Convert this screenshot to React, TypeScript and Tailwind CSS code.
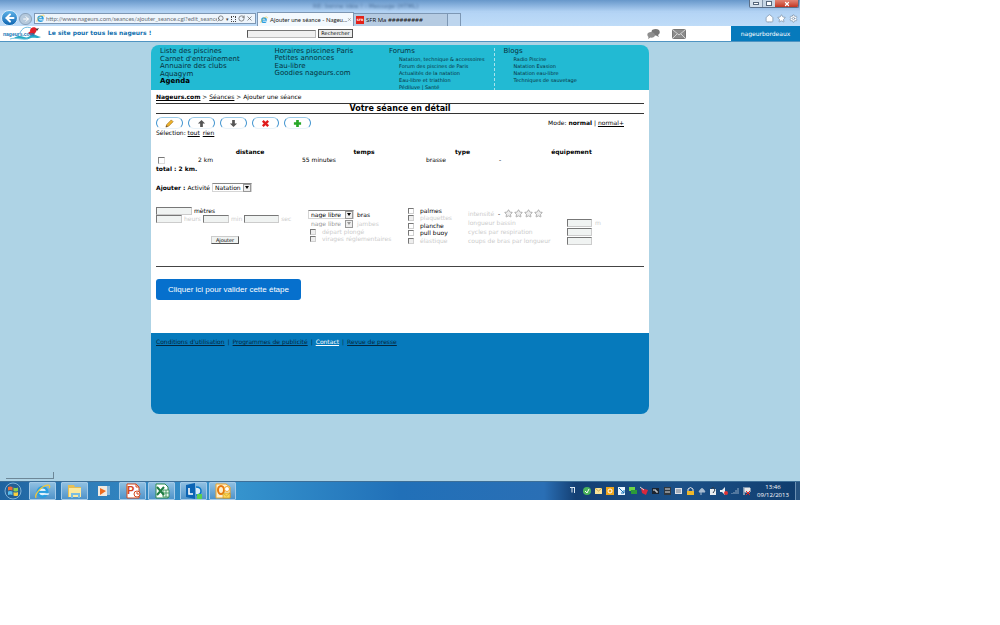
import React from 'react';
import type { ReactNode } from 'react';
import { Home, Star, Settings, Search, RotateCw, X, ArrowLeft, ArrowRight } from 'lucide-react';

const forums = [
  'Natation, technique & accessoires',
  'Forum des piscines de Paris',
  'Actualités de la natation',
  'Eau-libre et triathlon',
  'Pédiluve | Santé',
];
const blogs = ['Radio Piscine', 'Natation Evasion', 'Natation eau-libre', 'Techniques de sauvetage'];

const gear = [
  { id: 'palmes', label: 'palmes', on: true },
  { id: 'plaquettes', label: 'plaquettes', on: false },
  { id: 'planche', label: 'planche', on: true },
  { id: 'pullbuoy', label: 'pull buoy', on: true },
  { id: 'elastique', label: 'élastique', on: false },
];

const measures = [
  { id: 'bassin', label: 'longueur bassin', unit: 'm' },
  { id: 'cycles', label: 'cycles par respiration', unit: '' },
  { id: 'coups', label: 'coups de bras par longueur', unit: '' },
];

function IeLogo({ className }: { className: string }) {
  return (
    <svg viewBox="0 0 20 20" className={className}>
      <circle cx="10" cy="10.500" r="5.500" fill="#e4f3fc" stroke="#2a9fe0" strokeWidth="3.200" />
      <path d="M5 10.500h11" stroke="#2a9fe0" strokeWidth="2.400" />
      <path d="M12 12h6l-1 2.200h-5z" fill="#d6ecfa" />
      <path d="M2.500 17.500C0 14 8 4 15.500 2.500c3-.6 3.500 1.500 2.300 3.500" fill="none" stroke="#f4c73a" strokeWidth="1.500" />
    </svg>
  );
}

function NageursLogo() {
  return (
    <svg viewBox="0 0 42 14" className="h-[14px] w-[42px] shrink-0">
      <path d="M20 7c2-5 6-7 11-5" fill="none" stroke="#6cbbe0" strokeWidth="1" />
      <path d="M30 5c0-4 5-5 7-2l-1 3c-1 2-4 2-6-1z" fill="#e0232c" />
      <path d="M28 7l4-3 3 4-3 2z" fill="#e0232c" />
      <path d="M36 3l3-1-2 3z" fill="#333" />
      <path d="M14 12c4-3 7-2 10-1s5 0 7-2 5 1 10 2c-4 2-7 0-10 1-4 2-10 1-17 0z" fill="#27a9c5" />
      <path d="M10 13c6-2 10 1 18 0" fill="none" stroke="#7cc9df" strokeWidth="1" />
      <text x="3" y="10" fontSize="5" fontWeight="bold" fill="#1474b4" fontFamily="Liberation Sans, sans-serif">
        nageurs.com
      </text>
    </svg>
  );
}

function BrowserChrome() {
  return (
    <header className="flex h-[26px] flex-col bg-linear-to-b from-[#6f9fd0] via-[#b4d4f5] to-[#bfdcf8]">
      <div className="flex h-[12px] items-start justify-between bg-linear-to-b from-[#6797ca] to-[#b4d4f5]">
        <span className="pl-[313px] pt-[1px] text-[6px] leading-[10px] text-[#4b719c] blur-[1px]">RE: bonne idée ! - Message (HTML)</span>
        <div className="mr-[1px] flex h-[8px] overflow-hidden rounded-b-[2px] border border-t-0 border-[#5b6f88]">
          <button aria-label="Réduire" className="flex w-[12px] items-center justify-center bg-[#d3dfeb]">
            <span className="h-[3px] w-[6px] border border-[#56677b] bg-white" />
          </button>
          <button aria-label="Restaurer" className="flex w-[13px] items-center justify-center border-l border-[#8496aa] bg-[#c7d6e5]">
            <span className="h-[5px] w-[6px] border border-[#56677b] bg-white" />
          </button>
          <button aria-label="Fermer" className="flex w-[23px] items-center justify-center bg-linear-to-b from-[#e28474] to-[#c23420] text-white">
            <X className="h-[6px] w-[6px]" strokeWidth={5} />
          </button>
        </div>
      </div>
      <div className="flex h-[14px] items-end">
        <button aria-label="Précédent" className="ml-[1px] flex h-[16px] w-[17px] shrink-0 items-center justify-center self-end rounded-full border border-[#d9ebfa] bg-linear-to-b from-[#5eb3e8] to-[#0966b2] text-white">
          <ArrowLeft className="h-[12px] w-[12px]" strokeWidth={4} />
        </button>
        <button aria-label="Suivant" className="ml-[1px] mr-[2px] flex h-[12px] w-[13px] shrink-0 items-center justify-center self-center rounded-full border border-[#8ba3bc] bg-[#b5c9dc] text-white">
          <ArrowRight className="h-[8px] w-[8px]" strokeWidth={3} />
        </button>
        <div className="mb-[2px] flex h-[11px] w-[222px] shrink-0 items-center border border-[#7d97b4] bg-[#eef5fc] text-[#444]">
          <IeLogo className="mx-[1px] h-[9px] w-[9px] shrink-0" />
          <input
            aria-label="Adresse"
            className="h-[9px] w-[171px] bg-transparent font-[Lato,sans-serif] text-[6px] leading-[9px] text-[#6a7078]"
            defaultValue="http://www.nageurs.com/seances/ajouter_seance.cgi?edit_seance="
          />
          <Search className="h-[7px] w-[7px] -scale-x-100" />
          <span className="mx-[2px] text-[5px]">▾</span>
          <span className="mr-[2px] h-[6px] w-[5px] border border-dotted border-[#444]" />
          <RotateCw className="mr-[1px] h-[7px] w-[7px]" />
          <X className="h-[7px] w-[7px]" />
        </div>
        <div className="ml-[1px] flex h-[14px] w-[97px] shrink-0 items-center border border-b-0 border-[#7d97b4] bg-[#f3f9fe]">
          <IeLogo className="mx-[2px] h-[8px] w-[8px] shrink-0" />
          <span className="flex-1 whitespace-nowrap font-[Lato,sans-serif] text-[6px] leading-[12px] text-[#222]">Ajouter une séance - Nageu...</span>
          <X className="mr-[1px] h-[5px] w-[5px] text-[#666]" />
        </div>
        <div className="flex h-[13px] w-[94px] shrink-0 items-center border border-b-0 border-l-0 border-[#7d97b4] bg-[#b5cbe2]">
          <span className="mx-[2px] h-[8px] w-[8px] bg-[#e32118] text-center text-[3px] font-bold leading-[8px] text-white">SFR</span>
          <span className="font-['Open_Sans',sans-serif] text-[6px] leading-[12px] text-[#111]">SFR Ma #########</span>
        </div>
        <div className="h-[13px] w-[13px] shrink-0 border border-b-0 border-l-0 border-[#7d97b4] bg-[#bdd5ee]" />
        <div className="mb-[3px] ml-auto mr-[2px] flex gap-[3px] text-[#7e92a8]">
          <Home className="h-[9px] w-[9px] fill-white" />
          <Star className="h-[9px] w-[9px] fill-white" />
          <Settings className="h-[9px] w-[9px] fill-white" />
        </div>
      </div>
    </header>
  );
}

function SiteBar() {
  return (
    <div className="flex h-[16px] items-stretch border-b border-[#4f94c2] bg-white">
      <NageursLogo />
      <p className="ml-[6px] w-[199px] shrink-0 whitespace-nowrap text-[6px] font-bold leading-[14px] text-[#1270ae]">Le site pour tous les nageurs !</p>
      <form className="flex items-center gap-[2px]">
        <input aria-label="Recherche" className="h-[8px] w-[69px] border border-[#bbb] border-l-[#555] border-t-[#777] bg-[#f0f0f0] text-[6px]" />
        <button type="button" className="h-[9px] w-[35px] border border-[#555] bg-[#ececec] text-center text-[5px] leading-[7px] text-black">Rechercher</button>
      </form>
      <div className="ml-auto flex items-center gap-[12px] pr-[45px]">
        <svg viewBox="0 0 13 10" className="h-[10px] w-[13px]">
          <path d="M5 1q4-2 7 0 2 3-1 5l1 2-3-1.500Q5 7 4 4.500z" fill="#777" />
          <path d="M1 4q3-2 6 0 2 2 0 4-2 1-3.500.5L1 10l.5-2Q-.5 6 1 4z" fill="#8e8e8e" />
        </svg>
        <svg viewBox="0 0 14 10" className="h-[10px] w-[14px]">
          <rect x=".5" y=".5" width="13" height="9" rx="1" fill="#8b8b8b" stroke="#777" />
          <path d="M1 1l6 5 6-5M1 9l4-4M13 9L9 5" fill="none" stroke="#e4e4e4" strokeWidth=".8" />
        </svg>
      </div>
      <a href="#compte" className="w-[69px] bg-[#067abc] text-center text-[6px] leading-[15px] text-white">nageurbordeaux</a>
    </div>
  );
}

function SubLinks({ items }: { items: string[] }) {
  return (
    <ul className="pl-[10px] pt-[1px] text-[5px] leading-[7px]">
      {items.map((item) => (
        <li key={item} className="whitespace-nowrap">
          <a href="#lien">{item}</a>
        </li>
      ))}
    </ul>
  );
}

function Nav() {
  return (
    <nav className="grid h-[45px] grid-cols-4 overflow-hidden rounded-t-[8px] bg-[#22bad3] pl-[9px] pr-[31px] pt-[3px] text-[7px] leading-[7px] text-[#07303c]">
      <div className="flex h-[37px] flex-col justify-between whitespace-nowrap">
        <a href="#piscines">Liste des piscines</a>
        <a href="#carnet">Carnet d'entraînement</a>
        <a href="#clubs">Annuaire des clubs</a>
        <a href="#aquagym">Aquagym</a>
        <a href="#agenda" className="font-bold text-black">Agenda</a>
      </div>
      <div className="flex h-[29px] flex-col justify-between whitespace-nowrap">
        <a href="#horaires">Horaires piscines Paris</a>
        <a href="#annonces">Petites annonces</a>
        <a href="#eau">Eau-libre</a>
        <a href="#goodies">Goodies nageurs.com</a>
      </div>
      <div className="mr-[9px] border-r border-dashed border-[#a8e2ec]">
        <a href="#forums" className="block">Forums</a>
        <SubLinks items={forums} />
      </div>
      <div>
        <a href="#blogs" className="block">Blogs</a>
        <SubLinks items={blogs} />
      </div>
    </nav>
  );
}

function ToolButton({ label, children }: { label: string; children: ReactNode }) {
  return (
    <button aria-label={label} className="flex h-[12px] w-[27px] items-center justify-center rounded-[6px] border border-x-[#3f93cf] border-b-[#eaf3f9] border-t-[#9ccbe8] bg-white">
      <svg viewBox="0 0 10 10" className="h-[9px] w-[9px]">
        {children}
      </svg>
    </button>
  );
}

function Toolbar() {
  return (
    <div className="mt-[3px] flex items-center justify-between">
      <div className="flex gap-[5px]">
        <ToolButton label="Modifier">
          <path d="M1 9l1-3 5-5 2 2-5 5z" fill="#f0b429" stroke="#9a6a14" strokeWidth=".7" />
          <path d="M1 9l1-2 1 1z" fill="#433" />
        </ToolButton>
        <ToolButton label="Monter">
          <path d="M5 1l4 4H6.500v4h-3V5H1z" fill="#555" />
        </ToolButton>
        <ToolButton label="Descendre">
          <path d="M5 9l4-4H6.500V1h-3v4H1z" fill="#555" />
        </ToolButton>
        <ToolButton label="Supprimer">
          <path d="M2 2l6 6M8 2L2 8" stroke="#e01b1b" strokeWidth="2.600" />
        </ToolButton>
        <ToolButton label="Insérer">
          <path d="M5 1v8M1 5h8" stroke="#28a828" strokeWidth="3" />
        </ToolButton>
      </div>
      <p className="mr-[20px]">
        Mode: <b>normal</b> | <a href="#mode" className="underline">normal+</a>
      </p>
    </div>
  );
}

function Check({ id, label, on }: { id: string; label: string; on: boolean }) {
  return (
    <div className="flex h-[7px] items-center gap-[6px]">
      <input
        id={id}
        type="checkbox"
        disabled={!on}
        className="h-[6px] w-[6px] appearance-none border border-[#d0d0d0] border-l-[#777] border-t-[#777] bg-white disabled:bg-[#eee]"
      />
      <label htmlFor={id} className={on ? 'whitespace-nowrap' : 'whitespace-nowrap text-[#ccc]'}>
        {label}
      </label>
    </div>
  );
}

function Drop({ id, value, disabled, className }: { id: string; value: string; disabled?: boolean; className: string }) {
  return (
    <span className={`inline-flex h-[9px] items-center border ${disabled ? 'border-transparent text-[#999]' : 'border-[#d5d5d5] border-t-[#888]'} ${className}`}>
      <select id={id} disabled={disabled} className="h-[7px] min-w-0 flex-1 appearance-none pl-[2px] text-[6px] leading-[7px]">
        <option>{value}</option>
      </select>
      <span className="flex h-[8px] w-[8px] items-center justify-center border border-[#999] bg-[#eee]">
        <svg viewBox="0 0 4 3" className="h-[3px] w-[4px]">
          <path d="M0 0h4L2 3z" fill="currentColor" />
        </svg>
      </span>
    </span>
  );
}

function Box({ id, className, disabled }: { id: string; className: string; disabled?: boolean }) {
  return (
    <input
      id={id}
      aria-label={id}
      disabled={disabled}
      className={`h-[8px] border border-[#ccc] border-l-[#777] border-t-[#777] bg-[#f0f3f2] text-[6px] ${className}`}
    />
  );
}

function SetTable() {
  return (
    <table className="mt-[11px] w-full table-fixed text-left leading-[8px]">
      <thead className="text-center">
        <tr>
          <th className="w-[42px]" />
          <th className="w-[104px]">distance</th>
          <th className="w-[124px]">temps</th>
          <th className="w-[73px]">type</th>
          <th>équipement</th>
        </tr>
      </thead>
      <tbody>
        <tr>
          <td>
            <input type="checkbox" aria-label="Sélectionner 2 km" className="ml-[2px] block h-[7px] w-[7px] appearance-none border border-[#ddd] border-l-[#888] border-t-[#777]" />
          </td>
          <td>2 km</td>
          <td>55 minutes</td>
          <td>brasse</td>
          <td>-</td>
        </tr>
      </tbody>
    </table>
  );
}

function AddForm() {
  return (
    <form className="mt-[15px] flex h-[44px] items-start">
      <div className="w-[152px] shrink-0">
        <div className="flex h-[8px] items-center gap-[2px]">
          <Box id="distance" className="w-[36px]" />
          <label htmlFor="distance">mètres</label>
        </div>
        <div className="flex h-[8px] items-center gap-[2px] text-[#ccc]">
          <Box id="heures" className="w-[26px]" disabled />
          <label htmlFor="heures">heurs</label>
          <Box id="minutes" className="w-[26px]" disabled />
          <label htmlFor="minutes">min</label>
          <Box id="secondes" className="w-[35px]" disabled />
          <label htmlFor="secondes">sec</label>
        </div>
        <button type="button" className="ml-[55px] mt-[13px] block h-[8px] w-[28px] border border-[#ccc] border-b-[#555] border-r-[#555] bg-[#f0f3f2] text-center text-[5px] leading-[6px]">
          Ajouter
        </button>
      </div>
      <div className="w-[100px] shrink-0 pt-[3px]">
        <div className="flex h-[9px] items-center gap-[3px]">
          <Drop id="bras" value="nage libre" className="w-[46px]" />
          <label htmlFor="bras">bras</label>
        </div>
        <div className="flex h-[9px] items-center gap-[3px] text-[#ccc]">
          <Drop id="jambes" value="nage libre" disabled className="w-[46px]" />
          <label htmlFor="jambes">jambes</label>
        </div>
        <div className="pl-[2px]">
          <Check id="depart" label="départ plongé" on={false} />
          <Check id="virages" label="virages réglementaires" on={false} />
        </div>
      </div>
      <div className="flex h-[37px] w-[60px] shrink-0 flex-col justify-between">
        {gear.map((item) => (
          <Check key={item.id} {...item} />
        ))}
      </div>
      <div className="pt-[2px] text-[#ccc]">
        <div className="flex h-[9px] items-center">
          <span className="w-[30px]">intensité</span>
          <span className="w-[6px] text-black">-</span>
          {[1, 2, 3, 4].map((n) => (
            <button key={n} type="button" aria-label={`Intensité ${n}`} className="w-[10px]">
              <Star className="h-[9px] w-[9px] fill-[#eee] text-[#999]" />
            </button>
          ))}
        </div>
        {measures.map((m) => (
          <div key={m.id} className="flex h-[9px] items-center">
            <label htmlFor={m.id} className="w-[99px] whitespace-nowrap">{m.label}</label>
            <Box id={m.id} className="mr-[3px] w-[25px]" disabled />
            {m.unit}
          </div>
        ))}
      </div>
    </form>
  );
}

function PageFooter() {
  return (
    <footer className="flex h-[81px] gap-[3px] rounded-b-[8px] bg-[#067abc] px-[5px] pt-[5px] text-[6px] leading-[8px] text-[#04263c]">
      <a href="#conditions" className="underline">Conditions d'utilisation</a>
      <span>|</span>
      <a href="#pub" className="underline">Programmes de publicité</a>
      <span>|</span>
      <a href="#contact" className="text-white underline">Contact</a>
      <span>|</span>
      <a href="#presse" className="underline">Revue de presse</a>
    </footer>
  );
}

function OfficeIcon({ letter, color }: { letter: string; color: string }) {
  return (
    <svg viewBox="0 0 16 16" className="h-[16px] w-[16px]">
      <path d="M2 1h9l3 3v11H2z" fill="#fff" stroke={color} />
      <path d="M11 1v3h3" fill="none" stroke={color} />
      <text x="2" y="11" fontSize="11" fontWeight="bold" fill={color} fontFamily="Liberation Sans, sans-serif">
        {letter}
      </text>
      <circle cx="12" cy="11" r="3" fill="#fff" stroke={color} />
      <path d="M12 9v2h2" fill="none" stroke={color} />
    </svg>
  );
}

function TaskButton({ label, plain, children }: { label: string; plain?: boolean; children: ReactNode }) {
  return (
    <button
      aria-label={label}
      className={`flex h-[18px] w-[27px] items-center justify-center ${plain ? '' : 'rounded-[1px] border border-[#a3cae8] bg-linear-to-b from-[#8fc0e2] to-[#4f93c9]'}`}
    >
      {children}
    </button>
  );
}

function TrayIcons() {
  return (
    <svg viewBox="0 0 182 10" className="h-[10px] w-[182px] shrink-0">
      <path d="M1 1.500h5M3 1.500v5M5.500 2v5" stroke="#dce8f2" fill="none" />
      <circle cx="18" cy="5" r="4" fill="#4bb35b" />
      <path d="M16 5l2 2 2-4" stroke="#fff" fill="none" />
      <path d="M26 2h7v6h-7z" fill="#f8e39a" />
      <path d="M26 2l3.500 3L33 2" stroke="#b48b2d" fill="none" strokeWidth=".7" />
      <path d="M37 1h8v8h-8z" fill="#eda51d" />
      <circle cx="41" cy="5" r="2" fill="none" stroke="#fff" />
      <path d="M49 1h7v8h-7z" fill="#eaf5ff" />
      <path d="M50 2l5 5M52 7h3V4" stroke="#1573b9" fill="none" />
      <path d="M60 1h6v4h-6z" fill="#6fd545" />
      <path d="M62 4h6v4h-6z" fill="#2b9a39" />
      <path d="M72 2l7 2-2 5-4-2z" fill="#d9283c" />
      <path d="M71 1l4 3" stroke="#ddd" />
      <path d="M83 2h7v6h-7z" fill="#1b2431" />
      <path d="M84 4h3v2h2" stroke="#eee" fill="none" />
      <path d="M95 1h7v8h-7z" fill="#303840" />
      <path d="M96 3h5M96 6h5" stroke="#ddd" />
      <path d="M106 2h7v6h-7z" fill="#dde1e7" />
      <path d="M107 4h5M107 6h5" stroke="#69798b" />
      <path d="M118 5h7v4h-7z" fill="#efb72a" />
      <path d="M119 5V3q2.500-3 5 0v2" stroke="#e7e7e7" fill="none" />
      <path d="M130 6q3-7 6 0zM132 6v3" stroke="#a9bdd1" fill="#a9bdd1" />
      <path d="M141 3h6v6h-6z" fill="#e9eef2" />
      <path d="M142 3l2-2 2 3-2 3" stroke="#2c3e50" fill="none" />
      <path d="M151 4h2l3-3v8l-3-3h-2z" fill="#e8edf1" />
      <circle cx="157" cy="7" r="2" fill="#e13434" />
      <path d="M163 8v-1M165 8V6M167 8V4M169 8V2" stroke="#8fa9c3" />
      <path d="M175 1v8M176 2h5v4h-5z" stroke="#e8e8e8" fill="#e8e8e8" />
      <path d="M177 5l4 4M181 5l-4 4" stroke="#df2727" />
    </svg>
  );
}

function Taskbar() {
  return (
    <footer className="flex h-[19px] items-center border-t border-[#3d6f98] bg-[linear-gradient(to_right,#1f639f_0%,#2f7fbb_12%,#3593cd_30%,#2170b8_50%,#2a6fb5_68%,#143f73_72%,#1c5188_85%,#0f3c6d_100%)]">
      <button aria-label="Démarrer" className="ml-[4px] mr-[7px] shrink-0">
        <svg viewBox="0 0 18 18" className="h-[18px] w-[18px]">
          <circle cx="9" cy="9" r="8" fill="#235f94" stroke="#7fb2d8" />
          <path d="M4 5q2-1 4.500 0v3.500Q6 7.500 4 8.500z" fill="#ee6b36" />
          <path d="M9.500 5.500q2 1 4.500 0V9q-2 1-4.500 0z" fill="#8ed04b" />
          <path d="M4 9.500q2-1 4.500 0V13Q6 12 4 13z" fill="#58bdee" />
          <path d="M9.500 10q2 1 4.500 0v3.500q-2 1-4.500 0z" fill="#fbd13e" />
        </svg>
      </button>
      <div className="flex gap-[2px]">
        <TaskButton label="Internet Explorer">
          <IeLogo className="h-[17px] w-[17px]" />
        </TaskButton>
        <div className="w-[1px]" />
        <TaskButton label="Explorateur">
          <svg viewBox="0 0 16 16" className="h-[16px] w-[16px]">
            <path d="M1 2h6l1 2h6v10H1z" fill="#e7bf54" />
            <path d="M2 5h12v9H2z" fill="#fbe9a0" />
            <path d="M4 10h9v5h-2v-3H6v3H4z" fill="#79bde2" />
          </svg>
        </TaskButton>
        <TaskButton label="Lecteur" plain>
          <svg viewBox="0 0 12 12" className="h-[12px] w-[12px]">
            <rect x="3" y="1" width="9" height="9" fill="#88b7dc" />
            <rect y="1" width="9" height="10" fill="#f0e9e0" />
            <path d="M2 3l6 3-6 4z" fill="#ed6b1e" />
          </svg>
        </TaskButton>
        <TaskButton label="PowerPoint">
          <OfficeIcon letter="P" color="#d4491f" />
        </TaskButton>
        <TaskButton label="Excel">
          <svg viewBox="0 0 16 16" className="h-[16px] w-[16px]">
            <path d="M2 1h9l3 3v11H2z" fill="#fff" stroke="#2d8a50" />
            <path d="M9 7h6v7H9zM9 10h6M12 7v7" fill="#e7f5ea" stroke="#2d8a50" strokeWidth=".8" />
            <path d="M3 4l7 8M10 4l-7 8" stroke="#1f7c43" strokeWidth="2" />
          </svg>
        </TaskButton>
        <div className="w-[1px]" />
        <TaskButton label="Lync">
          <svg viewBox="0 0 16 16" className="h-[16px] w-[16px]">
            <path d="M0 2l9-2v16l-9-2z" fill="#0b64b4" />
            <path d="M3 5v6h4" fill="none" stroke="#fff" strokeWidth="1.600" />
            <path d="M10 4q5 0 5 4t-5 4" fill="#d8ecfa" stroke="#0b78c8" strokeWidth="1.500" />
            <rect x="11" y="11" width="5" height="5" fill="#5bd04e" />
          </svg>
        </TaskButton>
        <TaskButton label="Outlook">
          <svg viewBox="0 0 16 16" className="h-[16px] w-[16px]">
            <path d="M1 1h10l4 3v11H1z" fill="#fdf0cd" stroke="#eda52a" />
            <ellipse cx="6" cy="7" rx="3" ry="4" fill="none" stroke="#e8790c" strokeWidth="2" />
            <circle cx="12" cy="6" r="2.500" fill="#fff" stroke="#eda52a" />
            <path d="M8 10h7v5H8z" fill="#fbd758" stroke="#c98f17" strokeWidth=".6" />
            <path d="M8 10l3.500 3 3.500-3" fill="none" stroke="#c98f17" strokeWidth=".6" />
          </svg>
        </TaskButton>
      </div>
      <div className="ml-auto flex items-center">
        <TrayIcons />
        <div className="w-[44px] text-center font-['Open_Sans',sans-serif] text-[6px] leading-[8px] text-white">
          <p>13:46</p>
          <p>09/12/2013</p>
        </div>
        <div className="h-[18px] w-[5px] border-l border-[#6b8fb2] bg-[#26527f]" />
      </div>
    </footer>
  );
}

export default function App() {
  return (
    <div className="min-h-screen bg-white font-['DejaVu_Sans',sans-serif] text-[6px] leading-[8px] text-black">
      <div className="w-4/5">
        <BrowserChrome />
        <SiteBar />
        <div className="bg-[#aed3e5] pt-[3px]">
          <div className="mx-[151px]">
            <Nav />
            <main className="bg-white px-[5px] pb-[33px] pt-[3px]">
              <p>
                <a href="#accueil" className="font-bold underline">Nageurs.com</a> &gt;{' '}
                <a href="#seances" className="underline">Séances</a> &gt; Ajouter une séance
              </p>
              <h1 className="mt-[2px] border-y border-[#333] text-center text-[8px] font-bold leading-[9px]">Votre séance en détail</h1>
              <Toolbar />
              <p>
                Sélection: <a href="#tout" className="underline">tout</a> <a href="#rien" className="ml-[1px] underline">rien</a>
              </p>
              <SetTable />
              <p className="mt-[1px] font-bold">total : 2 km.</p>
              <div className="mt-[10px] flex items-center">
                <label htmlFor="activite" className="mr-[2px]">
                  <b>Ajouter :</b> Activité
                </label>
                <Drop id="activite" value="Natation" className="w-[40px]" />
              </div>
              <AddForm />
              <hr className="mt-[15px] border-t border-[#444]" />
              <button className="mt-[12px] h-[21px] w-[145px] rounded-[3px] bg-[#0670cd] text-center font-['Liberation_Sans',sans-serif] text-[8px] text-white">
                Cliquer ici pour valider cette étape
              </button>
            </main>
            <PageFooter />
          </div>
          <div className="flex h-[67px] items-end">
            <div className="mb-[2px] ml-[6px] h-[7px] w-[48px] border-b border-r border-[#6d8797]" />
          </div>
        </div>
        <Taskbar />
      </div>
    </div>
  );
}
